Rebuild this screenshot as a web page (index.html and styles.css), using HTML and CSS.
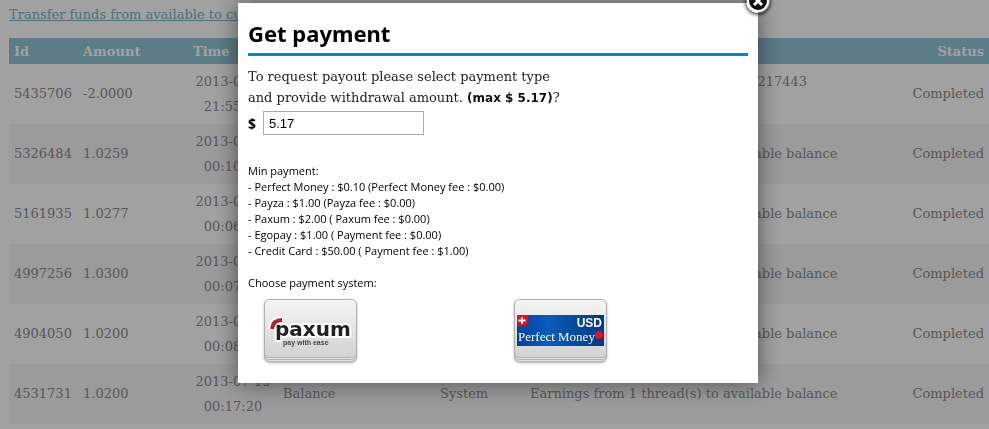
FILE: index.html
```
<!DOCTYPE html>
<html lang="en">
<head>
<meta charset="UTF-8">
<meta name="viewport" content="width=device-width, initial-scale=1.0">
<title>Get payment</title>
<link rel="stylesheet" href="styles.css">
</head>
<body>
<div class="page">
  <a class="transfer" href="#">Transfer funds from available to current balance</a>
  <table class="history">
    <colgroup>
      <col class="col-id"><col class="col-amount"><col class="col-time"><col class="col-type"><col class="col-from"><col><col class="col-status">
    </colgroup>
    <thead>
      <tr><th>Id</th><th>Amount</th><th>Time</th><th>Type</th><th>From</th><th>Description</th><th class="status">Status</th></tr>
    </thead>
    <tbody>
      <tr><td>5435706</td><td>-2.0000</td><td class="time">2013-07-24 21:55:10</td><td>Withdraw</td><td>System</td><td>Withdrawal request with number: 217443<br>Paxum</td><td class="status">Completed</td></tr>
      <tr><td>5326484</td><td>1.0259</td><td class="time">2013-07-23 00:10:14</td><td>Balance</td><td>System</td><td>Earnings from 1 thread(s) to available balance</td><td class="status">Completed</td></tr>
      <tr><td>5161935</td><td>1.0277</td><td class="time">2013-07-22 00:06:32</td><td>Balance</td><td>System</td><td>Earnings from 1 thread(s) to available balance</td><td class="status">Completed</td></tr>
      <tr><td>4997256</td><td>1.0300</td><td class="time">2013-07-21 00:07:41</td><td>Balance</td><td>System</td><td>Earnings from 1 thread(s) to available balance</td><td class="status">Completed</td></tr>
      <tr><td>4904050</td><td>1.0200</td><td class="time">2013-07-20 00:08:05</td><td>Balance</td><td>System</td><td>Earnings from 1 thread(s) to available balance</td><td class="status">Completed</td></tr>
      <tr><td>4531731</td><td>1.0200</td><td class="time">2013-07-19 00:17:20</td><td>Balance</td><td>System</td><td>Earnings from 1 thread(s) to available balance</td><td class="status">Completed</td></tr>
    </tbody>
  </table>
</div>

<div class="overlay">
  <form class="modal">
    <button type="button" class="close" aria-label="Close">
      <svg width="24" height="24" viewBox="0 0 24 24">
        <circle cx="12" cy="12" r="10" fill="#111" stroke="#fff" stroke-width="2"/>
        <path d="M8 8l8 8M16 8l-8 8" stroke="#fff" stroke-width="3"/>
      </svg>
    </button>
    <h1>Get payment</h1>
    <p class="intro">To request payout please select payment type<br>and provide withdrawal amount. <b>(max $ 5.17)</b>?</p>
    <div class="amount">
      <label for="amount">$</label>
      <input id="amount" type="text" value="5.17">
    </div>
    <div class="fees">
      <p>Min payment:</p>
      <ul>
        <li>- Perfect Money : $0.10 (Perfect Money fee : $0.00)</li>
        <li>- Payza : $1.00 (Payza fee : $0.00)</li>
        <li>- Paxum : $2.00 ( Paxum fee : $0.00)</li>
        <li>- Egopay : $1.00 ( Payment fee : $0.00)</li>
        <li>- Credit Card : $50.00 ( Payment fee : $1.00)</li>
      </ul>
      <p>Choose payment system:</p>
    </div>
    <div class="systems">
      <button type="button" class="system">
        <svg width="95" height="64" viewBox="0 0 95 64">
          <defs>
            <linearGradient id="card" x1="0" y1="0" x2="0" y2="1">
              <stop offset="0" stop-color="#f5f5f5"/>
              <stop offset="1" stop-color="#d2d2d2"/>
            </linearGradient>
            <linearGradient id="blue" x1="0" y1="0" x2="1" y2="0">
              <stop offset="0" stop-color="#00419a"/>
              <stop offset=".35" stop-color="#0a5cba"/>
              <stop offset="1" stop-color="#003a80"/>
            </linearGradient>
          </defs>
          <rect x="1.500" y="7.500" width="92" height="55" rx="5" fill="#e4e4e4" stroke="#b0b0b0"/>
          <rect x="1.500" y="5.500" width="92" height="55" rx="5" fill="#e4e4e4" stroke="#b0b0b0"/>
          <rect x="1.500" y=".5" width="92" height="58" rx="5" fill="url(#card)" stroke="#b0b0b0"/>
          <path d="M9 30Q10 21 19 21" fill="none" stroke="#fff" stroke-width="8"/>
          <text class="paxum" x="12" y="37">paxum</text>
          <path d="M9 30Q10 21 19 21" fill="none" stroke="#a8282a" stroke-width="4"/>
          <text class="slogan" x="20" y="46">pay with ease</text>
        </svg>
      </button>
      <button type="button" class="system">
        <svg width="95" height="64" viewBox="0 0 95 64">
          <rect x="1.500" y="7.500" width="92" height="55" rx="5" fill="#e4e4e4" stroke="#b0b0b0"/>
          <rect x="1.500" y="5.500" width="92" height="55" rx="5" fill="#e4e4e4" stroke="#b0b0b0"/>
          <rect x="1.500" y=".5" width="92" height="58" rx="5" fill="url(#card)" stroke="#b0b0b0"/>
          <rect x="4" y="16" width="87" height="31" fill="url(#blue)"/>
          <path d="M4 16h11v7q0 4-4 4h-7z" fill="#e30f1d"/>
          <path d="M9 18v7M5.500 21.500h7" stroke="#fff" stroke-width="2"/>
          <text class="usd" x="89" y="28">USD</text>
          <text class="pm" x="5" y="42">Perfect Money</text>
          <circle cx="86" cy="36" r="4" fill="#e8101c"/>
        </svg>
      </button>
    </div>
  </form>
</div>
</body>
</html>
```

FILE: styles.css
```
body {
  margin: 0;
  font-family: "DejaVu Serif", serif;
  font-size: 13px;
  color: #8c8c8c;
  background-color: #fff;
}

.page {
  padding: 5px 0 4px 9px;
}

.transfer {
  display: block;
  line-height: 20px;
  margin-bottom: 13px;
  color: #7cafc2;
}

.history {
  width: 100%;
  table-layout: fixed;
  border-collapse: collapse;
}

.history th,
.history td {
  padding: 0 5px;
  text-align: left;
}

.history th {
  height: 26px;
  background-color: #92c5d6;
  color: #fff;
}

.history td {
  box-sizing: border-box;
  height: 60px;
  padding-bottom: 1px;
  line-height: 25px;
}

.history tbody tr:nth-child(even) {
  background-color: #f5f5f5;
}

.history .time {
  text-align: center;
}

.history .status {
  text-align: right;
}

.col-id { width: 69px; }
.col-amount { width: 110px; }
.col-time { width: 90px; }
.col-type { width: 157px; }
.col-from { width: 90px; }
.col-status { width: 110px; }

.overlay {
  position: fixed;
  inset: 0;
  display: flex;
  justify-content: center;
  align-items: flex-start;
  padding: 3px 0 0 7px;
  background-color: rgba(0, 0, 0, 0.37);
}

.modal {
  position: relative;
  box-sizing: border-box;
  width: 520px;
  padding: 12px 10px 20px;
  background-color: #fff;
  color: #000;
  box-shadow: 0 0 22px rgba(0, 0, 0, 0.5);
}

.close {
  position: absolute;
  top: -14px;
  right: -12px;
  padding: 0;
  border: none;
  border-radius: 12px;
  background: none;
  box-shadow: 0 1px 4px #000;
  cursor: pointer;
}

svg {
  display: block;
}

h1 {
  margin: 0 0 10px;
  padding-bottom: 2px;
  border-bottom: 3px solid #0088cc;
  font-family: "Noto Sans", sans-serif;
  font-size: 22px;
  line-height: 36px;
}

.intro {
  margin: 0;
  line-height: 21px;
  color: #222;
}

.intro b {
  font-family: "DejaVu Sans", sans-serif;
  font-size: 12px;
  color: #111;
}

.amount {
  display: flex;
  align-items: center;
  gap: 7px;
  margin: 2px 0 28px;
}

.amount label {
  font: bold 14px "Noto Sans", sans-serif;
}

.amount input {
  box-sizing: border-box;
  width: 161px;
  height: 24px;
  padding: 0 5px;
  border: 1px solid #aaa;
  font: 13px "Liberation Sans", Arial, sans-serif;
}

.fees {
  font-family: "Open Sans", sans-serif;
  font-size: 11px;
  line-height: 16px;
}

.fees p {
  margin: 0;
}

.fees ul {
  margin: 0 0 16px;
  padding: 0;
  list-style: none;
}

.systems {
  display: grid;
  grid-template-columns: 1fr 1fr;
  padding-left: 15px;
  margin: 8px -15px 0 0;
}

.system {
  justify-self: start;
  padding: 0;
  border: none;
  background: none;
  filter: drop-shadow(0 1px 1px rgba(0, 0, 0, 0.3));
  cursor: pointer;
}

.paxum {
  font: bold 20px "DejaVu Sans", sans-serif;
  fill: #222;
  stroke: #fff;
  stroke-width: 4px;
  stroke-linejoin: round;
  paint-order: stroke;
}

.slogan {
  font: bold 7px "Liberation Sans", sans-serif;
  fill: #444;
}

.usd {
  font: bold 12px "Liberation Sans", sans-serif;
  fill: #fff;
  text-anchor: end;
}

.pm {
  font: 13px "Liberation Serif", serif;
  fill: #fff;
}
```
